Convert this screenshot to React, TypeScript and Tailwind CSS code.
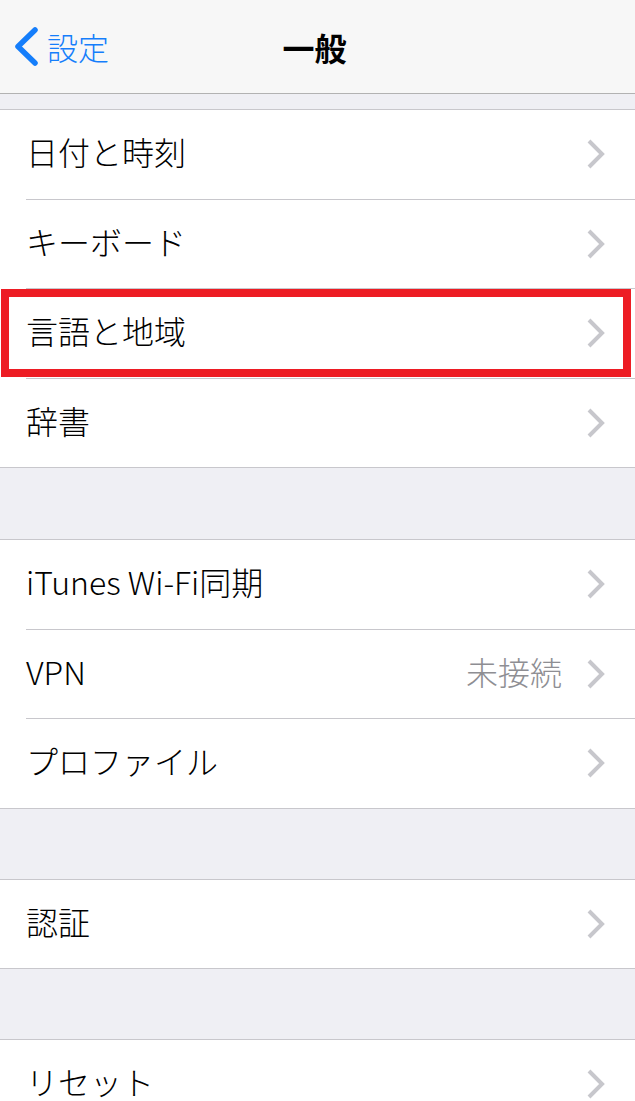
import React from "react";

type Item = { label: string; detail?: string; highlight?: boolean };

const GROUPS: Item[][] = [
  [
    { label: "日付と時刻" },
    { label: "キーボード" },
    { label: "言語と地域", highlight: true },
    { label: "辞書" },
  ],
  [
    { label: "iTunes Wi-Fi同期" },
    { label: "VPN", detail: "未接続" },
    { label: "プロファイル" },
  ],
  [{ label: "認証" }],
  [{ label: "リセット" }],
];

const FONT = { fontFamily: '"Noto Sans CJK JP", "Noto Sans", sans-serif' };

function Chevron() {
  return (
    <svg width="19" height="30" viewBox="0 0 19 30" className="shrink-0">
      <polyline
        points="3,2 16,15 3,28"
        fill="none"
        stroke="#c7c7cc"
        strokeWidth="4"
        strokeLinecap="butt"
        strokeLinejoin="miter"
      />
    </svg>
  );
}

function Row({ item, last }: { item: Item; last: boolean }) {
  return (
    <div
      className={
        "relative flex items-center bg-white pl-[26px] " +
        (last ? "h-[88.5px]" : "h-[89.5px]")
      }
    >
      <div
        className={
          "flex h-full flex-1 items-center pr-[30px] " +
          (last ? "" : "border-b border-[#c8c7cc]")
        }
      >
        <span className="flex-1 pb-[6px] text-[32px] font-light text-black leading-none">
          {item.label}
        </span>
        {item.detail && (
          <span className="mr-[24px] pb-[6px] text-[32px] font-light leading-none text-[#8e8e93]">
            {item.detail}
          </span>
        )}
        <Chevron />
      </div>
      {item.highlight && (
        <div className="absolute top-0 bottom-[1.5px] left-[1px] right-[4px] border-8 border-[#ed1c24]" />
      )}
    </div>
  );
}

export default function App() {
  return (
    <div className="h-[1101px] w-[635px] overflow-hidden bg-[#efeff4]" style={FONT}>
      {/* nav bar */}
      <div className="relative flex h-[94px] items-center border-b border-[#b2b2b2] bg-[#f7f7f7]">
        <div className="flex items-center pl-[13px] text-[#157efb]">
          <svg width="26" height="41" viewBox="0 0 26 41">
            <polyline
              points="22,4 5,20.5 22,37"
              fill="none"
              stroke="#157efb"
              strokeWidth="5.5"
              strokeLinecap="round"
              strokeLinejoin="round"
            />
          </svg>
          <span className="ml-[8px] text-[31px] font-light leading-none">設定</span>
        </div>
        <div className="absolute inset-0 flex items-center justify-center pr-[6px] text-[32px] font-bold text-black">
          一般
        </div>
      </div>

      <div className="h-[15px]" />

      {GROUPS.map((group, gi) => (
        <div key={gi}>
          {gi > 0 && <div className={gi === 1 ? "h-[71px]" : "h-[70px]"} />}
          <div className="border-y border-[#c8c7cc] bg-white">
            {group.map((item, i) => (
              <Row key={item.label} item={item} last={i === group.length - 1} />
            ))}
          </div>
        </div>
      ))}
    </div>
  );
}
